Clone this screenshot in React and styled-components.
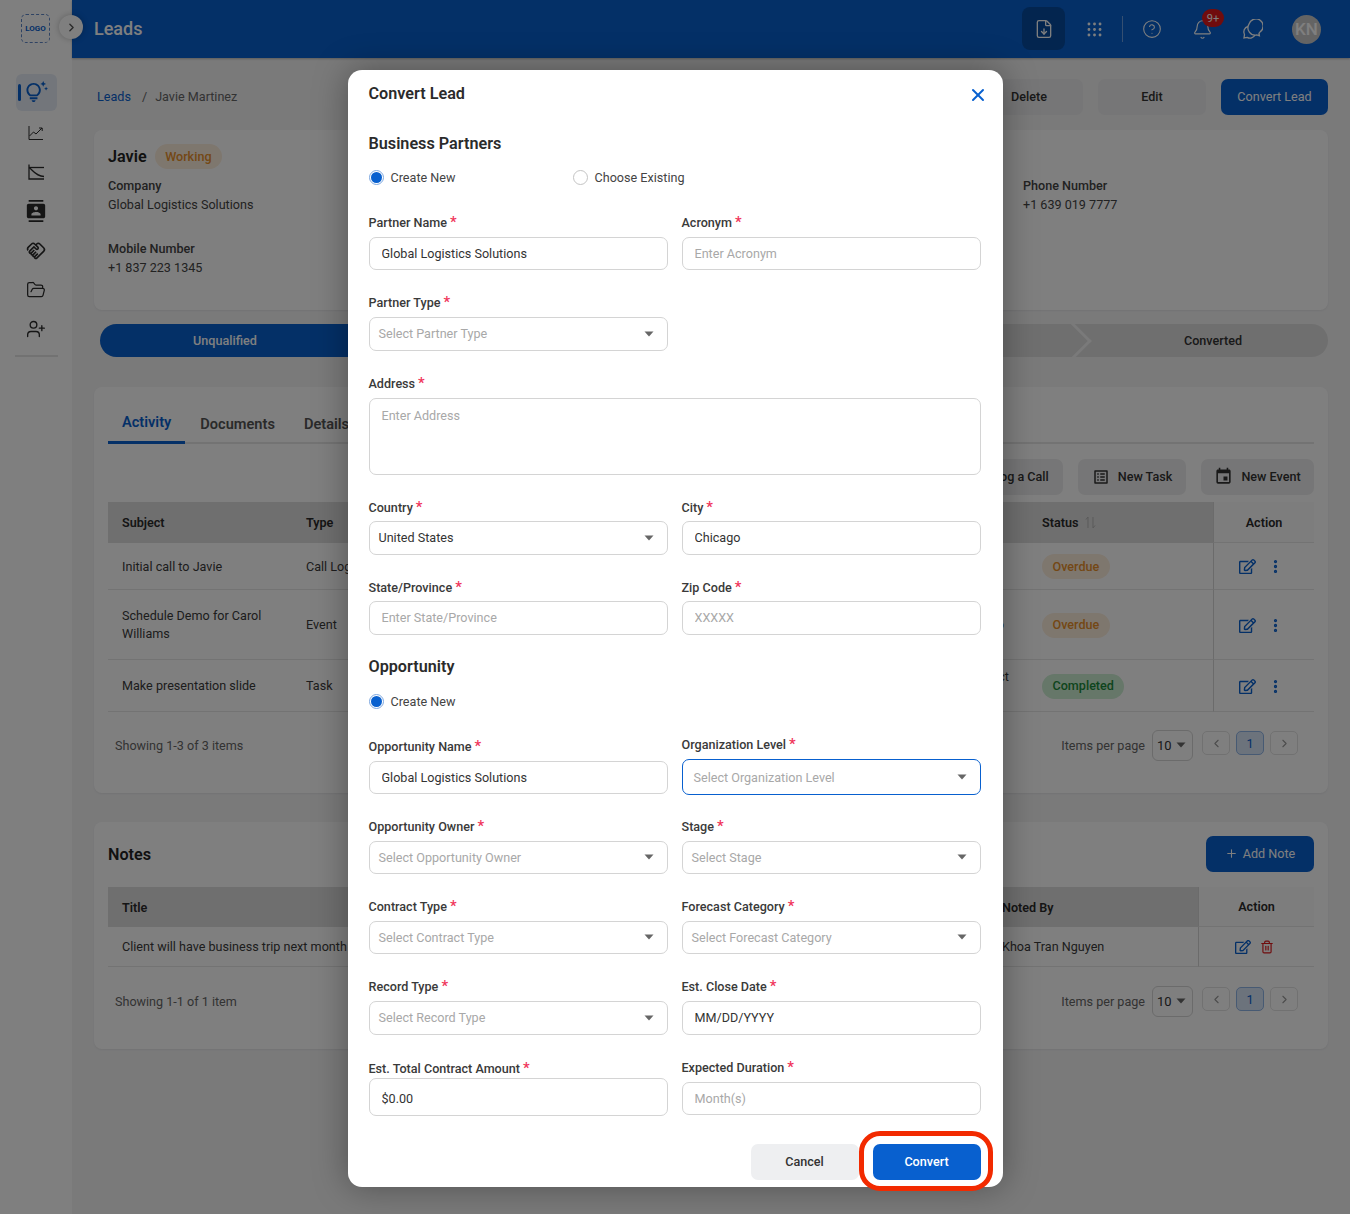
import styled, { createGlobalStyle } from "styled-components";
import {
  Bell,
  ChevronLeft,
  ChevronRight,
  CircleHelp,
  EllipsisVertical,
  FileDown,
  FolderOpen,
  Grip,
  Phone,
  Plus,
  Trash2,
  UserPlus,
  X,
} from "lucide-react";
import { FaRegEdit } from "react-icons/fa";
import {
  MdContacts,
  MdEvent,
  MdOutlineHandshake,
  MdOutlineListAlt,
  MdOutlineTipsAndUpdates,
} from "react-icons/md";

const blue = "#0860cf";

const GlobalStyle = createGlobalStyle`
  * { box-sizing: border-box; }
  html, body { margin: 0; padding: 0; }
  body {
    font-family: Roboto, "Liberation Sans", sans-serif;
    font-size: 12.6px;
    color: #333;
    background: #f4f4f5;
  }
`;

const Page = styled.div`
  display: flex;
  width: 1350px;
  height: 1214px;
  overflow: hidden;
  position: relative;
`;

const Sidebar = styled.aside`
  width: 72px;
  flex: none;
  background: #fff;
  display: flex;
  flex-direction: column;
  align-items: center;
  padding-top: 14px;
`;

const Logo = styled.div`
  width: 29px;
  height: 29px;
  border: 1px dashed #5f86c7;
  border-radius: 5px;
  color: ${blue};
  font-size: 8px;
  font-weight: 700;
  display: flex;
  align-items: center;
  justify-content: center;
  margin: 0 1px 31px 0;
`;

const Toggle = styled.div`
  position: absolute;
  left: 59px;
  top: 15px;
  width: 24px;
  height: 24px;
  border-radius: 50%;
  background: #fff;
  box-shadow: 0 0 6px rgba(0, 0, 0, 0.25);
  color: #555;
  display: flex;
  align-items: center;
  justify-content: center;
  z-index: 2;
`;

const NavItem = styled.div`
  width: 41px;
  height: ${(p) => (p.$active ? "37px" : "39.3px")};
  margin-bottom: ${(p) => (p.$active ? "2px" : "0")};
  border-radius: 6px;
  background: ${(p) => (p.$active ? "#e6edf7" : "transparent")};
  color: ${(p) => (p.$active ? blue : "#2b2b2b")};
  display: flex;
  align-items: center;
  justify-content: center;
  position: relative;
  &::before {
    content: "";
    display: ${(p) => (p.$active ? "block" : "none")};
    position: absolute;
    left: 2px;
    top: 10px;
    width: 3px;
    height: 17px;
    border-radius: 2px;
    background: ${blue};
  }
`;

const NavDivider = styled.div`
  width: 43px;
  height: 2px;
  background: #e4e4e4;
  margin-top: 6px;
`;

const Main = styled.div`
  flex: 1;
  min-width: 0;
  display: flex;
  flex-direction: column;
`;

const Header = styled.header`
  height: 58px;
  flex: none;
  background: ${blue};
  box-shadow: 0 1px 2px rgba(0, 0, 0, 0.25);
  display: flex;
  align-items: center;
  padding-left: 22px;
  color: #fff;
`;

const HeaderTitle = styled.div`
  font-size: 18px;
  font-weight: 500;
  flex: 1;
  margin-top: -2px;
`;

const DownloadButton = styled.div`
  width: 43px;
  height: 43px;
  border-radius: 8px;
  background: #064a9e;
  display: flex;
  align-items: center;
  justify-content: center;
  margin: -1px 7px 0 0;
`;

const HeaderIcon = styled.div`
  width: 44px;
  height: 44px;
  display: flex;
  align-items: center;
  justify-content: center;
  position: relative;
  margin-right: ${(p) => p.$gap || 0}px;
`;

const HeaderDivider = styled.div`
  width: 1px;
  height: 26px;
  background: rgba(255, 255, 255, 0.4);
  margin: 0 7px 0 6px;
`;

const NotifyBadge = styled.span`
  position: absolute;
  left: 22px;
  top: 2px;
  width: 22px;
  height: 18px;
  border-radius: 9px;
  background: #e0191b;
  font-size: 11px;
  display: flex;
  align-items: center;
  justify-content: center;
`;

const Avatar = styled.div`
  width: 29px;
  height: 29px;
  border-radius: 50%;
  background: #c9c9c9;
  color: #fff;
  font-size: 17px;
  font-weight: 500;
  display: flex;
  align-items: center;
  justify-content: center;
  margin: 0 29px 0 18px;
`;

const Content = styled.main`
  padding: 21px 22px 0;
`;

const TopRow = styled.div`
  display: flex;
  align-items: center;
  height: 36px;
  gap: 15px;
  padding-left: 3px;
  margin-bottom: 15px;
`;

const Crumbs = styled.div`
  flex: 1;
  display: flex;
  gap: 10px;
  color: #666;
  margin-top: -1px;
  a {
    color: ${blue};
  }
  span:first-of-type {
    margin: 0 -2px 0 1px;
  }
`;

const GrayButton = styled.div`
  width: ${(p) => p.$width || 108}px;
  height: 36px;
  padding-bottom: 1px;
  border-radius: 7px;
  background: #ededee;
  color: #333;
  font-weight: 500;
  display: flex;
  align-items: center;
  justify-content: center;
  gap: ${(p) => (p.$gap === undefined ? 8 : p.$gap)}px;
`;

const BlueButton = styled(GrayButton)`
  background: ${blue};
  color: #fff;
  font-weight: 400;
`;

const Card = styled.section`
  background: #fff;
  border-radius: 8px;
  box-shadow: 0 1px 2px rgba(0, 0, 0, 0.06);
  padding: ${(p) => p.$pad || "14px"};
  height: ${(p) => p.$height}px;
  margin-bottom: ${(p) => p.$bottom || 0}px;
`;

const NameRow = styled.div`
  display: flex;
  align-items: center;
  gap: 8px;
  height: 24px;
  margin-bottom: 8px;
`;

const Name = styled.div`
  font-size: 16.2px;
  font-weight: 600;
  color: #222;
`;

const Pill = styled.span`
  display: inline-flex;
  align-items: center;
  height: 25px;
  padding: 0 10.5px;
  border-radius: 13px;
  font-weight: 500;
  background: ${(p) => (p.$done ? "#cdeed3" : "#fdeedd")};
  color: ${(p) => (p.$done ? "#1b8a3a" : "#e9902b")};
`;

const InfoGrid = styled.div`
  display: grid;
  grid-template-columns: 915px 1fr;
`;

const Info = styled.div`
  margin-bottom: 25px;
  line-height: 19px;
  color: #444;
  b {
    display: block;
    font-weight: 500;
  }
`;

const Pipeline = styled.div`
  display: flex;
  height: 33px;
  margin: 0 0 30px 6px;
  border-radius: 17px;
  background: #dedede;
  overflow: hidden;
`;

const Stage = styled.div`
  flex: ${(p) => (p.$width ? `0 0 ${p.$width}px` : 1)};
  position: relative;
  display: flex;
  align-items: center;
  justify-content: center;
  font-weight: 500;
  padding-left: ${(p) => p.$indent || 0}px;
  color: ${(p) => (p.$active ? "#fff" : "#333")};
  background: ${(p) => (p.$active ? blue : "transparent")};
  &::after {
    content: "";
    display: ${(p) => (p.$last ? "none" : "block")};
    position: absolute;
    right: -13px;
    top: -1px;
    width: 24px;
    height: 24px;
    transform: translateY(5px) rotate(45deg) scale(1.4);
    border-top: 2px solid #f4f4f5;
    border-right: 2px solid #f4f4f5;
    z-index: 1;
  }
`;

const Tabs = styled.div`
  display: flex;
  height: 57px;
  border-bottom: 2px solid #e6e6e6;
  margin-bottom: 15px;
`;

const Tab = styled.div`
  height: 57px;
  padding: 16px 14px 0;
  font-size: 14.6px;
  font-weight: 600;
  display: flex;
  align-items: center;
  color: ${(p) => (p.$active ? blue : "#555")};
  border-bottom: ${(p) => (p.$active ? `3px solid ${blue}` : "none")};
  margin-right: 1px;
`;

const ActionBar = styled.div`
  display: flex;
  justify-content: flex-end;
  gap: 15px;
  margin-bottom: 7px;
`;

const Table = styled.div`
  display: grid;
  grid-template-columns: ${(p) => p.$cols};
`;

const Th = styled.div`
  height: ${(p) => p.$height || 41}px;
  background: ${(p) => (p.$side ? "#fbfbfb" : "#dedede")};
  font-weight: 600;
  color: #2b2b2b;
  display: flex;
  align-items: center;
  justify-content: ${(p) => (p.$side ? "center" : "flex-start")};
  padding: 0 14px;
  gap: 7px;
  border-left: ${(p) => (p.$side ? "1px solid #d6d6d6" : "none")};
  border-bottom: ${(p) => (p.$side ? "1px solid #e6e6e6" : "none")};
`;

const Td = styled.div`
  height: ${(p) => p.$height}px;
  border-bottom: 1px solid #e6e6e6;
  color: #3a3a3a;
  line-height: 18px;
  display: flex;
  align-items: center;
  justify-content: ${(p) => (p.$side ? "center" : p.$end ? "flex-end" : "flex-start")};
  padding: ${(p) => p.$pad || "1px 14px 0"};
  gap: ${(p) => (p.$side ? p.$gap || 0 : 0)}px;
  border-left: ${(p) => (p.$side ? "1px solid #d6d6d6" : "none")};
`;

const BlueIcon = styled.span`
  display: inline-flex;
  color: ${(p) => p.$color || blue};
`;

const Foot = styled.div`
  display: flex;
  align-items: center;
  height: 32px;
  margin-top: ${(p) => p.$top}px;
  padding: 0 16px 0 7px;
  color: #666;
`;

const Showing = styled.div`
  flex: 1;
`;

const PerPage = styled.div`
  width: 41px;
  height: 31px;
  margin: 0 9px 0 7px;
  border: 1px solid #d6d6d6;
  border-radius: 6px;
  color: #333;
  font-size: 13px;
  display: flex;
  align-items: center;
  justify-content: space-between;
  padding: 0 6px 0 4px;
`;

const PageBtn = styled.div`
  width: 28px;
  height: 24px;
  margin-right: 6px;
  border-radius: 5px;
  border: 1px solid ${(p) => (p.$on ? "#8fb4e6" : "#e3e3e3")};
  background: ${(p) => (p.$on ? "#d9e6f8" : "transparent")};
  color: ${(p) => (p.$on ? blue : "#999")};
  display: flex;
  align-items: center;
  justify-content: center;
  margin-top: -4px;
  &:last-child {
    margin-right: 0;
  }
`;

const NotesHead = styled.div`
  display: flex;
  align-items: center;
  justify-content: space-between;
  height: 36px;
  margin-bottom: 15px;
`;

const NotesTitle = styled.div`
  font-size: 16.2px;
  font-weight: 600;
  color: #222;
`;

const Caret = styled.svg.attrs({ viewBox: "0 0 10 6", width: 10, height: 6 })`
  flex: none;
  fill: ${(p) => p.$color || "#666"};
`;

const Overlay = styled.div`
  position: absolute;
  inset: 0;
  background: rgba(0, 0, 0, 0.5);
  display: flex;
  justify-content: center;
  padding-top: 70px;
  z-index: 5;
`;

const Modal = styled.div`
  width: 655px;
  height: 1117px;
  background: #fff;
  border-radius: 14px;
  box-shadow: 0 0 34px rgba(0, 0, 0, 0.35);
  padding: 12px 22px 0 21px;
`;

const ModalHead = styled.div`
  display: flex;
  align-items: center;
  justify-content: space-between;
  height: 22px;
  font-size: 16.2px;
  font-weight: 600;
  color: #2b2b2b;
  margin-bottom: 29px;
  svg {
    color: ${blue};
    margin: 3px -7px 0 0;
  }
`;

const SectionTitle = styled.div`
  height: 22px;
  line-height: 22px;
  font-size: 16.2px;
  font-weight: 600;
  color: #2b2b2b;
`;

const RadioRow = styled.div`
  display: flex;
  height: 18px;
  margin-top: ${(p) => p.$top}px;
  margin-bottom: 28px;
`;

const RadioLabel = styled.label`
  width: ${(p) => p.$width || 204}px;
  display: flex;
  align-items: center;
  gap: 7px;
  color: #444;
`;

const RadioDot = styled.span`
  width: 15px;
  height: 15px;
  border-radius: 50%;
  border: 1px solid ${(p) => (p.$on ? "#7ea8e0" : "#c4c4c4")};
  display: flex;
  align-items: center;
  justify-content: center;
  &::after {
    content: "";
    display: ${(p) => (p.$on ? "block" : "none")};
    width: 11px;
    height: 11px;
    border-radius: 50%;
    background: ${blue};
  }
`;

const FormRow = styled.div`
  display: grid;
  grid-template-columns: 299px 299px;
  column-gap: 14px;
  align-items: start;
  margin-bottom: ${(p) => (p.$bottom === undefined ? 24 : p.$bottom)}px;
`;

const Field = styled.div`
  display: flex;
  flex-direction: column;
  grid-column: ${(p) => (p.$wide ? "1 / 3" : "auto")};
  margin-top: ${(p) => p.$shift || 0}px;
  gap: ${(p) => (p.$gap === undefined ? 7 : p.$gap)}px;
`;

const Label = styled.div`
  height: 16px;
  line-height: 16px;
  font-weight: 500;
  color: #3a3a3a;
  span {
    color: #f0355a;
    font-size: 15px;
    margin-left: 3px;
  }
`;

const TextInput = styled.input`
  width: 100%;
  height: ${(p) => p.$height || 33}px;
  border: 1px solid #d4d4d4;
  border-radius: 7px;
  padding: ${(p) => (p.$height === 38 ? "2px 12px 0" : "0 12px 1px")};
  font: inherit;
  color: #333;
  outline: none;
  &::placeholder {
    color: #a8a8a8;
  }
`;

const TextArea = styled.textarea`
  width: 100%;
  height: 77px;
  border: 1px solid #d4d4d4;
  border-radius: 7px;
  padding: 9px 12px;
  font: inherit;
  color: #333;
  outline: none;
  resize: none;
  display: block;
  &::placeholder {
    color: #a8a8a8;
  }
`;

const SelectBox = styled.div`
  height: ${(p) => p.$height || 34}px;
  border: 1px solid ${(p) => (p.$focus ? blue : "#d4d4d4")};
  border-radius: 7px;
  padding: 0 13px ${(p) => (p.$focus ? 0 : 1)}px ${(p) => (p.$focus ? 11 : 9)}px;
  display: flex;
  align-items: center;
  justify-content: space-between;
  color: ${(p) => (p.$value ? "#333" : "#a8a8a8")};
`;

const ModalFoot = styled.div`
  display: flex;
  justify-content: flex-end;
  gap: 14px;
  position: relative;
`;

const CancelButton = styled(GrayButton)`
  background: #eeeff1;
`;

const ConvertButton = styled(GrayButton)`
  background: ${blue};
  color: #fff;
`;

const Highlight = styled.div`
  position: absolute;
  right: -12px;
  top: -13px;
  width: 134px;
  height: 60px;
  border: 5px solid #f22a00;
  border-radius: 21px;
  pointer-events: none;
`;

const ChartIcon = () => (
  <svg width="18" height="18" viewBox="0 0 18 18" fill="none" stroke="currentColor" strokeWidth="1">
    <path d="M2 2v13.5h14" />
    <path d="M2.5 12l4-4 2.5 2 6-6M12 4h3.2v3" />
  </svg>
);

const FunnelChartIcon = () => (
  <svg width="18" height="18" viewBox="0 0 18 18" fill="none" stroke="currentColor" strokeWidth="1.3">
    <path d="M2 1.5v14.5h15" />
    <path d="M2 4.5h15" />
    <path d="M2 4.5c3.5 2 6 8.5 15 9" />
  </svg>
);

const ChatIcon = () => (
  <svg width="21" height="21" viewBox="0 0 21 21" fill="none" stroke="currentColor" strokeWidth="1.3">
    <path d="M7 5.2A7.2 7.2 0 1 1 18 13c-.3.5-.6.9-1 1.3l.4 2.4-2.6-.8A7.2 7.2 0 0 1 7 5.2z" />
    <path d="M6 7.5a5.600 5.600 0 0 0-3.500 8.200L2 19l3.200-.6a5.600 5.600 0 0 0 7.800-2.400" />
  </svg>
);

const SortIcon = () => (
  <svg width="11" height="13" viewBox="0 0 11 13" fill="none" stroke="#b5b5b5" strokeWidth="1">
    <path d="M3 12V1L1 3.5M8 1v11l2-2.5" />
  </svg>
);

const DownCaret = ({ color }) => (
  <Caret $color={color}>
    <path d="M0.5 0.5h9L5 5.5z" />
  </Caret>
);

const Required = ({ children }) => (
  <Label>
    {children}
    <span>*</span>
  </Label>
);

const InputField = ({ label, placeholder, value, wide, shift, gap, height }) => (
  <Field $wide={wide} $shift={shift} $gap={gap}>
    <Required>{label}</Required>
    <TextInput readOnly placeholder={placeholder} value={value} $height={height} />
  </Field>
);

const SelectField = ({ label, text, value, focus, shift, height, gap }) => (
  <Field $shift={shift} $gap={gap}>
    <Required>{label}</Required>
    <SelectBox $value={value} $focus={focus} $height={height}>
      {text}
      <DownCaret />
    </SelectBox>
  </Field>
);

const Pager = ({ label, top }) => (
  <Foot $top={top}>
    <Showing>{label}</Showing>
    Items per page
    <PerPage>
      10
      <DownCaret />
    </PerPage>
    <PageBtn>
      <ChevronLeft size={13} />
    </PageBtn>
    <PageBtn $on>1</PageBtn>
    <PageBtn>
      <ChevronRight size={13} />
    </PageBtn>
  </Foot>
);

const activity = [
  { subject: "Initial call to Javie", type: "Call Log", related: "", status: "Overdue", height: 47 },
  { subject: "Schedule Demo for Carol Williams", type: "Event", related: "Demo", status: "Overdue", height: 70 },
  { subject: "Make presentation slide", type: "Task", related: "Project", status: "Completed", height: 52 },
];

function Row({ row }) {
  return (
    <>
      <Td $height={row.height}>
        <span>{row.subject}</span>
      </Td>
      <Td $height={row.height}>{row.type}</Td>
      <Td $height={row.height} $end $pad={row.related === "Project" ? "0 19px 18px 14px" : "0 24px 0 14px"}>
        {row.related}
      </Td>
      <Td $height={row.height}>
        <Pill $done={row.status === "Completed"}>{row.status}</Pill>
      </Td>
      <Td $height={row.height} $side $gap={11} $pad="1px 5px 0 0">
        <BlueIcon>
          <FaRegEdit size={17} />
        </BlueIcon>
        <BlueIcon>
          <EllipsisVertical size={17} strokeWidth={2.6} />
        </BlueIcon>
      </Td>
    </>
  );
}

const App = () => (
  <Page>
    <GlobalStyle />
    <Sidebar>
      <Logo>LOGO</Logo>
      <NavItem $active>
        <MdOutlineTipsAndUpdates size={23} />
      </NavItem>
      <NavItem>
        <ChartIcon />
      </NavItem>
      <NavItem>
        <FunnelChartIcon />
      </NavItem>
      <NavItem>
        <MdContacts size={22} />
      </NavItem>
      <NavItem>
        <MdOutlineHandshake size={20} />
      </NavItem>
      <NavItem>
        <FolderOpen size={20} strokeWidth={1.5} />
      </NavItem>
      <NavItem>
        <UserPlus size={20} strokeWidth={1.6} />
      </NavItem>
      <NavDivider />
    </Sidebar>
    <Toggle>
      <ChevronRight size={13} strokeWidth={2.5} />
    </Toggle>
    <Main>
      <Header>
        <HeaderTitle>Leads</HeaderTitle>
        <DownloadButton>
          <FileDown size={20} strokeWidth={1.6} />
        </DownloadButton>
        <HeaderIcon>
          <Grip size={19} strokeWidth={1.6} />
        </HeaderIcon>
        <HeaderDivider />
        <HeaderIcon $gap={6}>
          <CircleHelp size={20} strokeWidth={1.3} />
        </HeaderIcon>
        <HeaderIcon $gap={6}>
          <Bell size={21} strokeWidth={1.3} />
          <NotifyBadge>9+</NotifyBadge>
        </HeaderIcon>
        <HeaderIcon>
          <ChatIcon />
        </HeaderIcon>
        <Avatar>KN</Avatar>
      </Header>
      <Content>
        <TopRow>
          <Crumbs>
            <a>Leads</a>
            <span>/</span>
            <span>Javie Martinez</span>
          </Crumbs>
          <GrayButton>Delete</GrayButton>
          <GrayButton>Edit</GrayButton>
          <BlueButton $width={107}>Convert Lead</BlueButton>
        </TopRow>
        <Card $height={180} $bottom={14}>
          <NameRow>
            <Name>Javie</Name>
            <Pill>Working</Pill>
          </NameRow>
          <InfoGrid>
            <div>
              <Info>
                <b>Company</b>
                Global Logistics Solutions
              </Info>
              <Info>
                <b>Mobile Number</b>
                +1 837 223 1345
              </Info>
            </div>
            <div>
              <Info>
                <b>Phone Number</b>
                +1 639 019 7777
              </Info>
            </div>
          </InfoGrid>
        </Card>
        <Pipeline>
          <Stage $active $width={250}>
            Unqualified
          </Stage>
          <Stage />
          <Stage />
          <Stage />
          <Stage $last $width={262} $indent={32}>
            Converted
          </Stage>
        </Pipeline>
        <Card $height={406} $bottom={29} $pad="0 14px">
          <Tabs>
            <Tab $active>Activity</Tab>
            <Tab>Documents</Tab>
            <Tab>Details</Tab>
          </Tabs>
          <ActionBar>
            <GrayButton>
              <Phone size={16} />
              Log a Call
            </GrayButton>
            <GrayButton>
              <MdOutlineListAlt size={18} />
              New Task
            </GrayButton>
            <GrayButton $width={113}>
              <MdEvent size={19} />
              New Event
            </GrayButton>
          </ActionBar>
          <Table $cols="184px 130px 1fr 185px 101px">
            <Th>Subject</Th>
            <Th>Type</Th>
            <Th />
            <Th>
              Status
              <SortIcon />
            </Th>
            <Th $side>Action</Th>
            {activity.map((row) => (
              <Row key={row.subject} row={row} />
            ))}
          </Table>
          <Pager label="Showing 1-3 of 3 items" top={17} />
        </Card>
        <Card $height={227} $pad="14px">
          <NotesHead>
            <NotesTitle>Notes</NotesTitle>
            <BlueButton $gap={5}>
              <Plus size={13} />
              Add Note
            </BlueButton>
          </NotesHead>
          <Table $cols="880px 210px 116px">
            <Th $height={40}>Title</Th>
            <Th $height={40}>Noted By</Th>
            <Th $height={40} $side>
              Action
            </Th>
            <Td $height={40}>Client will have business trip next month</Td>
            <Td $height={40}>Khoa Tran Nguyen</Td>
            <Td $height={40} $side $gap={9} $pad="1px 4px 0 0">
              <BlueIcon>
                <FaRegEdit size={16} />
              </BlueIcon>
              <BlueIcon $color="#e0191b">
                <Trash2 size={14} />
              </BlueIcon>
            </Td>
          </Table>
          <Pager label="Showing 1-1 of 1 item" top={18} />
        </Card>
      </Content>
    </Main>
    <Overlay>
      <Modal>
        <ModalHead>
          Convert Lead
          <X size={20} strokeWidth={2.4} />
        </ModalHead>
        <SectionTitle>Business Partners</SectionTitle>
        <RadioRow $top={13}>
          <RadioLabel>
            <RadioDot $on />
            Create New
          </RadioLabel>
          <RadioLabel>
            <RadioDot />
            Choose Existing
          </RadioLabel>
        </RadioRow>
        <FormRow>
          <InputField label="Partner Name" value="Global Logistics Solutions" />
          <InputField label="Acronym" placeholder="Enter Acronym" />
        </FormRow>
        <FormRow>
          <SelectField label="Partner Type" text="Select Partner Type" />
        </FormRow>
        <FormRow>
          <Field $wide>
            <Required>Address</Required>
            <TextArea readOnly placeholder="Enter Address" />
          </Field>
        </FormRow>
        <FormRow>
          <SelectField label="Country" text="United States" value gap={6} />
          <InputField label="City" value="Chicago" height={34} gap={6} />
        </FormRow>
        <FormRow $bottom={21}>
          <InputField label="State/Province" placeholder="Enter State/Province" height={34} gap={6} />
          <InputField label="Zip Code" placeholder="XXXXX" height={34} gap={6} />
        </FormRow>
        <SectionTitle>Opportunity</SectionTitle>
        <RadioRow $top={14}>
          <RadioLabel>
            <RadioDot $on />
            Create New
          </RadioLabel>
        </RadioRow>
        <FormRow $bottom={23}>
          <InputField label="Opportunity Name" value="Global Logistics Solutions" />
          <SelectField label="Organization Level" text="Select Organization Level" focus shift={-2} height={36} />
        </FormRow>
        <FormRow>
          <SelectField label="Opportunity Owner" text="Select Opportunity Owner" height={33} />
          <SelectField label="Stage" text="Select Stage" height={33} />
        </FormRow>
        <FormRow>
          <SelectField label="Contract Type" text="Select Contract Type" height={33} />
          <SelectField label="Forecast Category" text="Select Forecast Category" height={33} />
        </FormRow>
        <FormRow $bottom={25}>
          <SelectField label="Record Type" text="Select Record Type" />
          <InputField label="Est. Close Date" value="MM/DD/YYYY" height={34} />
        </FormRow>
        <FormRow $bottom={28}>
          <InputField label="Est. Total Contract Amount" value="$0.00" gap={2} height={38} />
          <InputField label="Expected Duration" placeholder="Month(s)" shift={-1} />
        </FormRow>
        <ModalFoot>
          <CancelButton>Cancel</CancelButton>
          <ConvertButton>Convert</ConvertButton>
          <Highlight />
        </ModalFoot>
      </Modal>
    </Overlay>
  </Page>
);

export default App;
